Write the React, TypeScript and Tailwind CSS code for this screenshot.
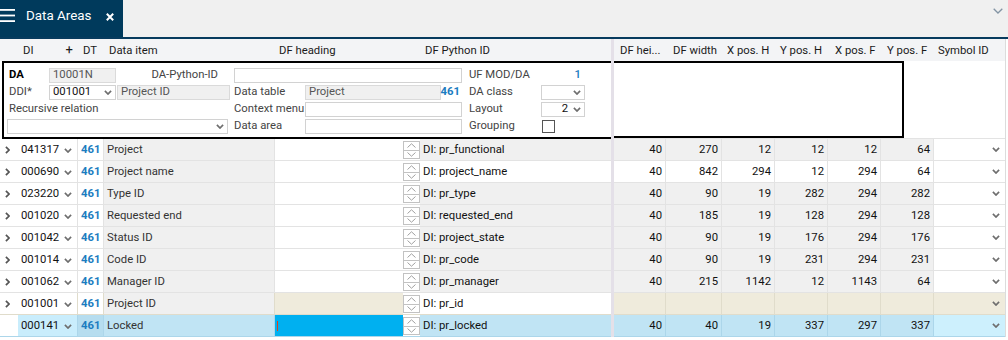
import React from 'react';

type Kind = 'std' | 'alt' | 'new' | 'sel';

interface Row {
  di: string;
  item: string;
  py: string;
  nums: string[];
  kind: Kind;
}

const rows: Row[] = [
  { di: '041317', item: 'Project', py: 'DI: pr_functional', nums: ['40', '270', '12', '12', '12', '64'], kind: 'std' },
  { di: '000690', item: 'Project name', py: 'DI: project_name', nums: ['40', '842', '294', '12', '294', '64'], kind: 'alt' },
  { di: '023220', item: 'Type ID', py: 'DI: pr_type', nums: ['40', '90', '19', '282', '294', '282'], kind: 'std' },
  { di: '001020', item: 'Requested end', py: 'DI: requested_end', nums: ['40', '185', '19', '128', '294', '128'], kind: 'std' },
  { di: '001042', item: 'Status ID', py: 'DI: project_state', nums: ['40', '90', '19', '176', '294', '176'], kind: 'std' },
  { di: '001014', item: 'Code ID', py: 'DI: pr_code', nums: ['40', '90', '19', '231', '294', '231'], kind: 'std' },
  { di: '001062', item: 'Manager ID', py: 'DI: pr_manager', nums: ['40', '215', '1142', '12', '1143', '64'], kind: 'std' },
  { di: '001001', item: 'Project ID', py: 'DI: pr_id', nums: ['', '', '', '', '', ''], kind: 'new' },
  { di: '000141', item: 'Locked', py: 'DI: pr_locked', nums: ['40', '40', '19', '337', '297', '337'], kind: 'sel' },
];

// cell backgrounds per row state
const tones: Record<Kind, Record<string, string>> = {
  std: { line: 'border-[#e3e3e3]', di: 'bg-white', dt: 'bg-white', item: 'bg-[#f0f0f0]', head: 'bg-white', py: 'bg-[#f0f0f0]', num: 'bg-[#f0f0f0]', sym: 'bg-white' },
  alt: { line: 'border-[#e3e3e3]', di: 'bg-white', dt: 'bg-white', item: 'bg-[#f0f0f0]', head: 'bg-white', py: 'bg-white', num: 'bg-white', sym: 'bg-white' },
  new: { line: 'border-[#e0dccb]', di: 'bg-white', dt: 'bg-white', item: 'bg-[#f0f0f0]', head: 'bg-[#efebdc]', py: 'bg-white', num: 'bg-[#efebdc]', sym: 'bg-[#efebdc]' },
  sel: { line: 'border-[#acd6ea]', di: 'bg-[#c9edfc]', dt: 'bg-[#b6ddef]', item: 'bg-[#c0e4f4]', head: 'bg-[#00b0f0]', py: 'bg-[#c0e4f4]', num: 'bg-[#c0e4f4]', sym: 'bg-[#cdf0fd]' },
};

const numWidths = ['w-[52px]', 'w-[56px]', 'w-[53px]', 'w-[53px]', 'w-[53px]', 'w-[53px]'];

const rightHeads = [
  { t: 'DF hei...', c: 'w-[52px] pl-[6px]' },
  { t: 'DF width', c: 'w-[56px] pl-[7px]' },
  { t: 'X pos. H', c: 'w-[53px] pl-[5px]' },
  { t: 'Y pos. H', c: 'w-[53px] pl-[5px]' },
  { t: 'X pos. F', c: 'w-[53px] pl-[7px]' },
  { t: 'Y pos. F', c: 'w-[53px] pl-[6px]' },
  { t: 'Symbol ID', c: 'w-[71px] pl-[4px]' },
];

const Chev = () => (
  <svg width="8" height="5" viewBox="0 0 8 5">
    <path d="M0.9 0.9 L4 4 L7.1 0.9" fill="none" stroke="#6e6e6e" strokeWidth="1.7" />
  </svg>
);

const Arrow = () => (
  <svg width="5" height="8" viewBox="0 0 5 8">
    <path d="M0.9 0.9 L4 4 L0.9 7.1" fill="none" stroke="#555" strokeWidth="1.7" />
  </svg>
);

const Spinner = () => (
  <div className="w-[17px] h-full flex flex-col pt-[2px] pb-[1px]">
    <div className="flex-1 border border-[#c2c2c2] bg-white flex items-center justify-center">
      <svg width="9" height="5" viewBox="0 0 9 5">
        <path d="M0.5 4.5 L4.5 0.8 L8.5 4.5" fill="none" stroke="#a0a0a0" strokeWidth="1" />
      </svg>
    </div>
    <div className="flex-1 border border-t-0 border-[#c2c2c2] bg-white flex items-center justify-center">
      <svg width="9" height="5" viewBox="0 0 9 5">
        <path d="M0.5 0.5 L4.5 4.2 L8.5 0.5" fill="none" stroke="#a0a0a0" strokeWidth="1" />
      </svg>
    </div>
  </div>
);

const Field = ({ text, grey, chev, className }: { text?: string; grey?: boolean; chev?: boolean; className?: string }) => (
  <div
    className={`h-[15px] flex items-center justify-between px-[3px] border ${
      grey ? 'bg-[#f0f0f0] border-[#dadada] text-[#555]' : 'bg-white border-[#d2d2d2] text-[#111]'
    } ${className ?? ''}`}
  >
    <span>{text}</span>
    {chev && <Chev />}
  </div>
);

const Label = ({ children, className }: { children: React.ReactNode; className?: string }) => (
  <div className={`h-[15px] flex items-center text-[#444] ${className ?? ''}`}>{children}</div>
);

export default function App() {
  return (
    <div className="w-[1008px] h-[340px] overflow-hidden bg-white font-['Roboto',sans-serif] text-[11.3px] text-[#333]">
      {/* tab bar */}
      <div className="flex h-[37px] bg-[#f0f0f0]">
        <div className="w-[123px] bg-[#003a5c] flex items-start">
          <svg className="mt-[9px]" width="16" height="14" viewBox="0 0 16 14">
            <rect x="0" y="0" width="15" height="1.8" fill="#fff" />
            <rect x="0" y="5.6" width="15" height="1.8" fill="#fff" />
            <rect x="0" y="11.2" width="15" height="1.8" fill="#fff" />
          </svg>
          <span className="mt-[8px] ml-[10px] leading-[16px] text-[13.4px] text-white">Data Areas</span>
          <svg className="mt-[13px] ml-auto mr-[9px]" width="8" height="8" viewBox="0 0 8 8">
            <path d="M0.8 0.8 L7.2 7.2 M7.2 0.8 L0.8 7.2" stroke="#fff" strokeWidth="2" />
          </svg>
        </div>
        <div className="flex-1 flex justify-end items-start pt-[8px] pr-[5px]">
          <svg width="10" height="6" viewBox="0 0 10 6">
            <path d="M0.7 0.7 L5 5 L9.3 0.7" fill="none" stroke="#8394a4" strokeWidth="1.3" />
          </svg>
        </div>
      </div>
      <div className="h-[2px] bg-[#073b5e]" />

      <div className="flex">
        {/* left pane */}
        <div className="w-[611px]">
          <div className="h-[22px] pt-[3px] bg-[#f3f4f6] flex items-center text-[#1a1a1a]">
            <div className="w-[18px]" />
            <div className="w-[60px] flex justify-between px-[5px]">
              <span>DI</span>
              <span className="text-[13px] leading-none">+</span>
            </div>
            <div className="w-[26px] pl-[5px]">DT</div>
            <div className="w-[171px] pl-[5px]">Data item</div>
            <div className="w-[145px] pl-[4px]">DF heading</div>
            <div className="w-[191px] pl-[5px]">DF Python ID</div>
          </div>

          {/* expanded detail form */}
          <div className="h-[78px] pl-[2px]">
            <div className="h-full border-2 border-r-0 border-black pl-[5px] pt-[5px] grid grid-cols-[40px_67px_2px_112px_4px_71px_136px_21px_7px_72px_44px] grid-rows-[15px_15px_15px_15px] gap-y-[2px]">
              <div className="h-[15px] flex items-center font-bold text-black">DA</div>
              <Field text="10001N" grey />
              <Label className="col-span-2 justify-end pr-[12px]">DA-Python-ID</Label>
              <div />
              <Field className="col-span-3" />
              <div />
              <Label>UF MOD/DA</Label>
              <div className="h-[15px] flex items-center justify-end pr-[4px] font-medium text-[#1b7cc0]">1</div>

              <Label>DDI*</Label>
              <Field text="001001" chev />
              <div />
              <Field text="Project ID" grey className="-ml-[1px]" />
              <div />
              <Label>Data table</Label>
              <Field text="Project" grey />
              <div className="h-[15px] flex items-center justify-end pr-[2px] font-bold text-[#1b7cc0]">461</div>
              <div />
              <Label>DA class</Label>
              <Field chev />

              <Label className="col-span-4">Recursive relation</Label>
              <div />
              <Label>Context menu</Label>
              <Field className="col-span-2" />
              <div />
              <Label>Layout</Label>
              <Field chev className="[&>span]:ml-auto [&>span]:mr-[5px]" text="2" />

              <Field chev className="col-span-4 -ml-[2px] mr-[2px]" />
              <div />
              <Label>Data area</Label>
              <Field className="col-span-2" />
              <div />
              <Label>Grouping</Label>
              <div className="h-[15px] flex items-center pl-[1px]">
                <div className="w-[13px] h-[13px] border border-[#555] bg-white" />
              </div>
            </div>
          </div>

          {rows.map((r) => {
            const t = tones[r.kind];
            return (
              <div key={r.di} className={`h-[22px] flex border-b ${t.line} text-[#333]`}>
                <div className="w-[18px] flex items-center pl-[5px]">{r.kind !== 'sel' && <Arrow />}</div>
                <div className={`w-[60px] border-r ${t.line} ${t.di} flex items-center justify-between pl-[3px] pr-[5px] pt-[1px] text-[#111]`}>
                  <span>{r.di}</span>
                  <Chev />
                </div>
                <div className={`w-[26px] border-r ${t.line} ${t.dt} flex items-center pl-[3px] pt-[1px] font-bold text-[#1b7cc0]`}>461</div>
                <div className={`w-[171px] border-r ${t.line} ${t.item} flex items-center pl-[3px] pt-[1px]`}>{r.item}</div>
                <div className={`w-[128px] ${t.head} flex items-center pl-[2px]`}>
                  {r.kind === 'sel' && <div className="w-[1px] h-[10px] bg-[#e0401a]" />}
                </div>
                <Spinner />
                <div className={`w-[191px] ${t.py} flex items-center pl-[3px] pt-[1px] text-[#111]`}>{r.py}</div>
              </div>
            );
          })}
        </div>

        {/* splitter */}
        <div className="w-[3px] bg-[#e4e0e8]" />

        {/* right pane */}
        <div className="w-[391px]">
          <div className="h-[22px] pt-[3px] bg-[#f3f4f6] flex items-center text-[#1a1a1a]">
            {rightHeads.map((h) => (
              <div key={h.t} className={`${h.c} whitespace-nowrap`}>{h.t}</div>
            ))}
          </div>
          <div className="h-[78px] border-b border-[#e3e3e3]">
            <div className="w-[290px] h-[77px] border-2 border-l-0 border-black" />
          </div>
          {rows.map((r) => {
            const t = tones[r.kind];
            return (
              <div key={r.di} className={`h-[22px] flex border-b ${t.line} text-[#111]`}>
                {r.nums.map((n, i) => (
                  <div key={i} className={`${numWidths[i]} border-r ${t.line} ${t.num} flex items-center justify-end pr-[3px] pt-[1px]`}>
                    {n}
                  </div>
                ))}
                <div className={`w-[71px] ${t.sym} flex items-center justify-end pr-[5px]`}>
                  <Chev />
                </div>
              </div>
            );
          })}
        </div>
        <div className="w-[3px] border-l border-[#dcdcdc] bg-white" />
      </div>
    </div>
  );
}
